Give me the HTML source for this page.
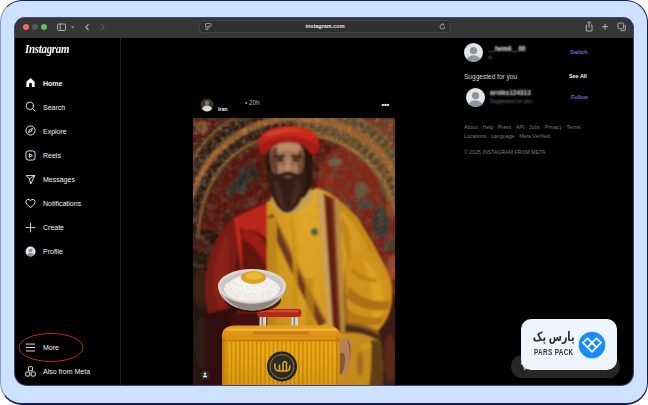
<!DOCTYPE html>
<html lang="en">
<head>
<meta charset="utf-8">
<title>Instagram</title>
<style>
*{box-sizing:border-box;margin:0;padding:0}
html,body{width:648px;height:405px;background:#fff;overflow:hidden}
body{font-family:"Liberation Sans",sans-serif;position:relative;color:#f5f5f5}
.frame{position:absolute;left:0;top:0;width:648px;height:405px;background:#cde2ff;border:1px solid #1b1a5c;border-bottom-width:2px;border-left-color:rgba(27,26,92,0.35);border-radius:22px}
.win{position:absolute;left:15px;top:18px;width:618px;height:367px;background:#000;box-shadow:0 0 0 1px rgba(21,20,70,0.75);border-radius:10px 10px 12px 12px;overflow:hidden}
.in{position:absolute;left:0;top:-1px;width:618px;height:369px}
.bar{position:absolute;left:0;top:0;width:100%;height:21px;background:#363637}
.tl{position:absolute;top:7px;width:6px;height:6px;border-radius:50%}
.url{position:absolute;left:184px;top:3px;width:252px;height:13px;border-radius:4px;background:#2f2f31;border:1px solid #454547;color:#e6e6e6;font-size:5.5px;font-weight:bold;text-align:center;line-height:11px}
.side{position:absolute;left:0;top:21px;width:106px;height:349px;border-right:1px solid #1f1f1f}
.logo{position:absolute;left:10px;top:4px;font-family:"Liberation Serif",serif;font-style:italic;font-weight:bold;font-size:12.500px;color:#fff;letter-spacing:-0.300px;transform:scaleX(0.870);transform-origin:0 0}
.nav{position:absolute;left:28px;margin-top:0.7px;font-size:7px;color:#f2f2f2;white-space:nowrap;line-height:8px}
.nav.b{font-weight:bold}
.ico{position:absolute;left:10px;width:11px;height:11px}
.t{position:absolute;white-space:nowrap}
.main,.rail{position:absolute;left:0;top:0;width:0;height:0}
.blur{filter:url(#tb)}
.foot{font-size:5.150px;color:#7e7e7e;letter-spacing:0.050px}
.post{position:absolute;left:178px;top:101px;width:202px;height:269px;background:#6a2a1a;overflow:hidden}
.pill{position:absolute;left:496px;top:338px;width:109px;height:23px;border-radius:11.500px;background:#262626}
.card{position:absolute;left:506px;top:302px;width:96px;height:51px;border-radius:10px;background:#eef5ff}
.card .fa{position:absolute;right:42.500px;top:8.500px;font-family:"Liberation Sans","DejaVu Sans",sans-serif;font-weight:bold;font-size:9.500px;line-height:18px;transform:scaleY(1.320);color:#2b2b2b;direction:rtl;white-space:nowrap}
.card .en{position:absolute;left:12.500px;top:28px;font-size:8.600px;font-weight:bold;transform:scaleX(0.740);transform-origin:0 0;letter-spacing:0.450px;color:#303030;white-space:nowrap}
</style>
</head>
<body>
<svg width="0" height="0" style="position:absolute"><defs><filter id="tb" x="-10%" y="-30%" width="120%" height="160%"><feGaussianBlur stdDeviation="1" result="b"/><feComposite in="SourceGraphic" in2="b" operator="arithmetic" k1="0" k2="0.2" k3="0.9" k4="0"/></filter></defs></svg>
<div class="frame"></div>
<div class="win"><div class="in">
  <div class="bar">
    <div class="tl" style="left:8px;background:#ed6a5e"></div>
    <div class="tl" style="left:17px;background:#5a5a5c"></div>
    <div class="tl" style="left:26px;background:#61c554"></div>
    <svg style="position:absolute;left:40px;top:5px" width="70" height="11" viewBox="0 0 70 11" fill="none" stroke="#b9b9bb" stroke-width="0.9">
      <rect x="2.5" y="2" width="8" height="6.5" rx="1"/><line x1="5.2" y1="2" x2="5.2" y2="8.5"/>
      <path d="M16.2 4.6 L17.8 6.2 L19.4 4.6" fill="#b9b9bb" stroke="none"/>
      <path d="M33.5 2.3 L30.8 5.2 L33.5 8.1" stroke-width="1.1"/>
      <path d="M46.5 2.3 L49.2 5.2 L46.5 8.1" stroke="#5d5d60" stroke-width="1.1"/>
    </svg>
    <div class="url">instagram.com
      <svg style="position:absolute;left:5px;top:2px" width="7" height="7" viewBox="0 0 7 7" fill="none" stroke="#a9a9ab" stroke-width="0.8"><rect x="0.500" y="0.600" width="5.600" height="2.800" rx="0.300"/><line x1="0.300" y1="5" x2="4.600" y2="5"/><line x1="0.300" y1="6.500" x2="3.200" y2="6.500"/></svg>
      <svg style="position:absolute;right:4px;top:2px" width="7" height="7" viewBox="0 0 7 7" fill="none" stroke="#b9b9bb" stroke-width="0.8"><path d="M5.8 3.6 A2.4 2.4 0 1 1 4.6 1.5"/><path d="M3.6 0.3 L5 1.5 L3.6 2.6" /></svg>
    </div>
    <svg style="position:absolute;left:567px;top:3px" width="50" height="14" viewBox="0 0 50 14" fill="none" stroke="#b9b9bb" stroke-width="0.9">
      <path d="M5.5 5.2 H4.3 V11 H10 V5.2 H8.8"/><path d="M7.15 8 V1.8 M5.5 3.3 L7.15 1.6 L8.8 3.3"/>
      <path d="M20 6.7 H26 M23 3.7 V9.7" stroke-width="1"/>
      <rect x="36" y="3" width="5.6" height="5.8" rx="1.2"/><path d="M43.3 5 V9.5 A1.2 1.2 0 0 1 42.1 10.7 H38.6" />
    </svg>
  </div>
  <div class="side">
    <div class="logo">Instagram</div>
    <!-- nav items: y relative to .side (top=38 global => side top = 16+1+21=38) -->
    <svg class="ico" style="top:39px" viewBox="0 0 24 24"><path d="M3 22 V10.2 L12 2 L21 10.2 V22 H15 V15.5 a3 3 0 0 0 -6 0 V22 Z" fill="#fff"/></svg>
    <div class="nav b" style="top:41px">Home</div>
    <svg class="ico" style="top:63px" viewBox="0 0 24 24" fill="none" stroke="#f5f5f5" stroke-width="2" stroke-linecap="round"><circle cx="10.5" cy="10.5" r="8"/><line x1="16.5" y1="16.5" x2="22" y2="22"/></svg>
    <div class="nav" style="top:65px">Search</div>
    <svg class="ico" style="top:87px" viewBox="0 0 24 24" fill="none" stroke="#f5f5f5" stroke-width="2" stroke-linejoin="round"><circle cx="12" cy="12" r="10"/><path d="M16.5 7.5 L13.8 13.8 L7.5 16.5 L10.2 10.2 Z"/></svg>
    <div class="nav" style="top:89px">Explore</div>
    <svg class="ico" style="top:111.5px" viewBox="0 0 24 24" fill="none" stroke="#f5f5f5" stroke-width="2" stroke-linejoin="round"><rect x="2" y="2" width="20" height="20" rx="5.5"/><path d="M9.5 8 L16 12 L9.5 16 Z"/></svg>
    <div class="nav" style="top:113px">Reels</div>
    <svg class="ico" style="top:135.5px" viewBox="0 0 24 24" fill="none" stroke="#f5f5f5" stroke-width="2" stroke-linejoin="round"><path d="M2.5 3.5 H21.5 L12.5 21.5 L9.5 10.5 Z"/><path d="M9.5 10.5 L21.5 3.5"/></svg>
    <div class="nav" style="top:137px">Messages</div>
    <svg class="ico" style="top:159.5px" viewBox="0 0 24 24" fill="none" stroke="#f5f5f5" stroke-width="2" stroke-linejoin="round"><path d="M12 21 C5 15.5 2 12 2 8.2 A5.2 5.2 0 0 1 12 6.2 A5.2 5.2 0 0 1 22 8.2 C22 12 19 15.5 12 21 Z"/></svg>
    <div class="nav" style="top:161px">Notifications</div>
    <svg class="ico" style="top:183.500px" viewBox="0 0 24 24" fill="none" stroke="#f5f5f5" stroke-width="1.8" stroke-linecap="round"><path d="M12 2.5 V21.5 M2.500 12 H21.500"/></svg>
    <div class="nav" style="top:185px">Create</div>
    <svg class="ico" style="top:208px" viewBox="0 0 24 24"><circle cx="12" cy="12" r="11" fill="#e4e6ea"/><circle cx="12" cy="9.500" r="4.300" fill="#8e949e"/><path d="M4 19.500 A8.500 7 0 0 1 20 19.500 A11 11 0 0 1 4 19.500 Z" fill="#8e949e"/></svg>
    <div class="nav" style="top:209.500px">Profile</div>
    <svg class="ico" style="top:303.500px" viewBox="0 0 24 24" fill="none" stroke="#f5f5f5" stroke-width="2" stroke-linecap="round"><path d="M3 4.500 H21 M3 12 H21 M3 19.500 H21"/></svg>
    <div class="nav" style="top:305px">More</div>
    <svg class="ico" style="top:327.500px" viewBox="0 0 24 24" fill="none" stroke="#f5f5f5" stroke-width="2"><rect x="7.500" y="1.500" width="9" height="9" rx="1.800"/><rect x="1.500" y="13" width="9" height="9" rx="1.800"/><rect x="13.500" y="13" width="9" height="9" rx="1.800"/></svg>
    <div class="nav" style="top:329.500px">Also from Meta</div>
    <svg style="position:absolute;left:2px;top:294px" width="68" height="32" viewBox="0 0 68 32" fill="none" stroke="#d0312d" stroke-width="0.9"><ellipse cx="34" cy="15.500" rx="32" ry="14"/></svg>
  </div>
  <!-- main feed -->
  <div class="main">
    <svg style="position:absolute;left:185px;top:81px" width="14" height="14" viewBox="0 0 14 14"><defs><filter id="ab"><feGaussianBlur stdDeviation="0.6"/></filter><clipPath id="ac"><circle cx="7" cy="7" r="6.5"/></clipPath></defs><g clip-path="url(#ac)"><rect width="14" height="14" fill="#39382f"/><g filter="url(#ab)"><ellipse cx="7" cy="11.500" rx="5" ry="4" fill="#d8d8d2"/><circle cx="7" cy="5" r="2.200" fill="#8a7560"/></g></g></svg>
    <div class="t" style="left:203px;top:88.500px;font-size:5.200px;font-weight:bold;color:#f2f2f2">Iran</div>
    <div class="t" style="left:230px;top:82px;font-size:6.300px;color:#b4b4b4">• 20h</div>
    <div class="t" style="left:366.500px;top:83px;font-size:8px;font-weight:bold;letter-spacing:-0.3px;color:#f2f2f2">•••</div>
    <div class="post">
<svg width="202" height="269" viewBox="0 0 202 269" style="position:absolute;left:0;top:0">
<defs>
  <filter id="b1" x="-10%" y="-10%" width="120%" height="120%"><feGaussianBlur stdDeviation="0.9"/></filter>
  <filter id="b2" x="-10%" y="-10%" width="120%" height="120%"><feGaussianBlur stdDeviation="1.6"/></filter>
  <filter id="b3" x="-20%" y="-20%" width="140%" height="140%"><feGaussianBlur stdDeviation="3.5"/></filter>
  <filter id="b05"><feGaussianBlur stdDeviation="0.45"/></filter>
  <!-- dark motif blotches -->
  <filter id="tex" x="0" y="0" width="100%" height="100%">
    <feTurbulence type="fractalNoise" baseFrequency="0.13" numOctaves="2" seed="11" result="n"/>
    <feColorMatrix in="n" type="matrix" values="0 0 0 0 0.11  0 0 0 0 0.09  0 0 0 0 0.07  2.6 0 0 0 -1.05"/>
  </filter>
  <!-- gold flecks -->
  <filter id="tex2" x="0" y="0" width="100%" height="100%">
    <feTurbulence type="fractalNoise" baseFrequency="0.22" numOctaves="2" seed="5" result="n"/>
    <feColorMatrix in="n" type="matrix" values="0 0 0 0 0.72  0 0 0 0 0.48  0 0 0 0 0.20  0 2.6 0 0 -1.25"/>
  </filter>
  <!-- robe fabric grain -->
  <filter id="tex3" x="0" y="0" width="100%" height="100%">
    <feTurbulence type="fractalNoise" baseFrequency="0.35" numOctaves="2" seed="2" result="n"/>
    <feColorMatrix in="n" type="matrix" values="0 0 0 0 0.45  0 0 0 0 0.27  0 0 0 0 0.04  0 0 1.8 0 -0.75"/>
  </filter>
  <filter id="rice" x="0" y="0" width="100%" height="100%">
    <feTurbulence type="fractalNoise" baseFrequency="0.45" numOctaves="2" seed="9" result="n"/>
    <feColorMatrix in="n" type="matrix" values="0 0 0 0 0.62  0 0 0 0 0.62  0 0 0 0 0.68  0 0 2.4 0 -1.05" result="c"/>
    <feComposite in="c" in2="SourceGraphic" operator="in"/>
  </filter>
  <linearGradient id="gShade" x1="0" y1="0" x2="0" y2="1"><stop offset="0" stop-color="#b06a10" stop-opacity="0"/><stop offset="0.45" stop-color="#b06a10" stop-opacity="0.120"/><stop offset="1" stop-color="#a86210" stop-opacity="0.420"/></linearGradient>
  <linearGradient id="gHat" x1="0" y1="0" x2="0" y2="1"><stop offset="0" stop-color="#cf2f1f"/><stop offset="0.5" stop-color="#bf2519"/><stop offset="1" stop-color="#8a1610"/></linearGradient>
  <linearGradient id="gCase" x1="0" y1="0" x2="0" y2="1"><stop offset="0" stop-color="#e6a020"/><stop offset="0.18" stop-color="#de9016"/><stop offset="0.32" stop-color="#e9a80f"/><stop offset="1" stop-color="#d6940c"/></linearGradient>
  <linearGradient id="gRobe" x1="0" y1="0" x2="1" y2="0"><stop offset="0" stop-color="#cf941c"/><stop offset="0.3" stop-color="#e6aa27"/><stop offset="0.7" stop-color="#dc9e22"/><stop offset="1" stop-color="#c88c1c"/></linearGradient>
  <pattern id="ribs" width="4.2" height="10" patternUnits="userSpaceOnUse"><rect x="0" width="1.400" height="10" fill="#b06f08" opacity="0.55"/><rect x="2.200" width="0.900" height="10" fill="#f6c23a" opacity="0.35"/></pattern>
  <clipPath id="ricec"><ellipse cx="59" cy="170" rx="29" ry="13"/></clipPath>
  <clipPath id="bandc"><path d="M-10 -10 L212 -10 L212 110 L204 100 C192 46 152 15 101 17 C46 17 8 55 5 120 L-10 130 Z"/></clipPath>
  <clipPath id="fieldc"><path d="M5 120 C8 55 46 17 101 17 C152 15 192 46 204 100 L204 150 L5 150 Z"/></clipPath>
  <clipPath id="pc"><rect width="202" height="269"/></clipPath>
  <clipPath id="robeclip"><path d="M74 84 C84 78 108 78 124 70 C134 73 142 78 147 83 L164 99 L178.500 123 L191 146 C195 153 198 160 199 168 C200 180 198 192 194 200 C191 206 188 210 185 213 L186 218 C189 230 190 250 190 269 L74 269 Z"/></clipPath>
</defs>
<g clip-path="url(#pc)">
  <!-- carpet background -->
  <rect width="202" height="269" fill="#4a1610"/>
  <g filter="url(#b2)">
    <!-- inner arch field -->
    <path d="M5 120 C8 55 46 17 101 17 C152 15 192 46 204 100 L204 150 L5 150 Z" fill="#571710"/>
    <ellipse cx="158" cy="66" rx="34" ry="40" fill="#812519"/>
    <ellipse cx="140" cy="100" rx="20" ry="20" fill="#6e1f15"/>
    <!-- arch band (wide, mixed) -->
    <path d="M-6 100 C-2 50 40 2 101 0" fill="none" stroke="#41291a" stroke-width="34"/>
    <path d="M101 0 C166 0 208 44 213 94" fill="none" stroke="#7c5a2e" stroke-width="34"/>
    <!-- central stripe -->
    <path d="M-6 100 C-2 50 40 2 101 0 C166 0 208 44 213 94" fill="none" stroke="#a0642f" stroke-width="6.500"/>
    <!-- top corners -->
    <path d="M0 0 L34 0 C18 10 6 24 0 38 Z" fill="#561d12"/>
    <circle cx="9" cy="9" r="5.500" fill="#8c602a"/>
    <circle cx="9" cy="9" r="2.500" fill="#5a2214"/>
    <path d="M202 0 L170 0 C186 8 196 20 202 34 Z" fill="#7a3a20"/>
    <!-- motifs in field -->
    <ellipse cx="50" cy="62" rx="7" ry="14" fill="#2c2b28" transform="rotate(15 50 62)"/>
    <ellipse cx="62" cy="56" rx="4" ry="10" fill="#2f2622" transform="rotate(-20 62 56)"/>
    <ellipse cx="40" cy="70" rx="4" ry="9" fill="#33302b" transform="rotate(40 40 70)"/>
    <ellipse cx="36" cy="98" rx="10" ry="8" fill="#46160f"/>
    <ellipse cx="60" cy="84" rx="6" ry="5" fill="#6c2216"/>
    <ellipse cx="142" cy="44" rx="7" ry="4" fill="#6a6248"/>
    <ellipse cx="168" cy="72" rx="6" ry="8" fill="#665a40"/>
    <ellipse cx="150" cy="90" rx="8" ry="5" fill="#585844"/>
    <ellipse cx="136" cy="64" rx="5" ry="8" fill="#8e2e1c"/>
    <!-- lower left dark -->
    <path d="M-5 112 L20 112 L44 120 L44 275 L-5 275 Z" fill="#27140f"/>
    <ellipse cx="8" cy="126" rx="10" ry="8" fill="#4a1c14"/>
    <ellipse cx="8" cy="170" rx="8" ry="20" fill="#382418"/>
    <ellipse cx="10" cy="225" rx="9" ry="26" fill="#2f1d17"/>
    <!-- lower right -->
    <rect x="160" y="84" width="50" height="92" fill="#782318"/>
    <ellipse cx="188" cy="104" rx="9" ry="16" fill="#38362f"/>
    <ellipse cx="172" cy="86" rx="8" ry="5" fill="#4a4438"/>
    <ellipse cx="198" cy="92" rx="5" ry="8" fill="#8a4a24"/>
    <ellipse cx="199" cy="150" rx="5" ry="12" fill="#a04a22"/>
    <ellipse cx="196" cy="128" rx="6" ry="6" fill="#4a3a2c"/>
    <rect x="176" y="176" width="34" height="100" fill="#3c1c13"/>
    <ellipse cx="197" cy="240" rx="6" ry="24" fill="#5a2a18"/>
  </g>
  <g filter="url(#b1)" fill="none">
    <path d="M-8 70 C-6 30 36 -14 101 -17" stroke="#a07232" stroke-width="1.400"/>
    <path d="M5 120 C8 55 46 17 101 17 C152 15 192 46 204 100" stroke="#a87434" stroke-width="1.700"/>
    <path d="M-7 84 C-4 40 38 -6 101 -8.500" stroke="#21140e" stroke-width="8" stroke-dasharray="4.500 2.500" opacity="0.780"/>
    <path d="M-1 112 C3 56 43 10 101 8.500" stroke="#21140e" stroke-width="8" stroke-dasharray="4.500 2.500" opacity="0.780"/>
    <path d="M101 8.500 C159 8 200 48 209 98" stroke="#33291f" stroke-width="7" stroke-dasharray="4 3.500" opacity="0.550"/>
    <path d="M101 -8.500 C170 -8 214 34 218 80" stroke="#33291f" stroke-width="7" stroke-dasharray="4 3.500" opacity="0.550"/>
  </g>
  <rect width="202" height="150" filter="url(#tex)" opacity="0.500"/>
  <g clip-path="url(#bandc)"><rect width="202" height="130" filter="url(#tex2)" opacity="0.300"/></g>
  <g clip-path="url(#fieldc)"><rect width="202" height="150" filter="url(#tex2)" opacity="0.100"/></g>

  <g filter="url(#b1)">
    <!-- red cloak left -->
    <path d="M44 97 L76 83 L78 215 L24 215 C12 200 10 172 14 150 C18 126 30 105 44 97 Z" fill="#61150f"/>
    <path d="M41 100 L76 84 L75 122 C70 116 60 110 50 112 Z" fill="#bb251a"/>
    <path d="M50 112 C58 110 70 118 74 130 L74 150 C68 136 58 124 48 120 Z" fill="#9c1e15"/>
    <path d="M14 150 C18 128 30 107 41 100 L48 120 C42 140 38 170 36 215 L24 215 C12 198 10 172 14 150 Z" fill="#7a1c15"/>
    <path d="M21 150 C23 140 28 126 35 116 L36 150 C34 165 32 180 30 195 C22 185 19 168 21 150 Z" fill="#8a2018"/>
    <path d="M41 100 L46 98 C48 118 50 140 49 160 C47 140 44 120 41 100 Z" fill="#c02a1e"/>
    <path d="M12 196 L44 188 L40 269 L12 269 Z" fill="#32100d"/>
    <path d="M36 196 L78 196 L78 269 L36 269 Z" fill="#43110d"/>
    <!-- yellow robe body -->
    <path d="M74 84 C84 78 108 78 124 70 C134 73 142 78 147 83 L164 99 L178.500 123 L191 146 C195 153 198 160 199 168 C200 180 198 192 194 200 C191 206 188 210 185 213 L186 218 C189 230 190 250 190 269 L74 269 Z" fill="url(#gRobe)"/>
    <g clip-path="url(#robeclip)">
      <rect x="70" y="80" width="135" height="190" fill="url(#gShade)"/>
      <rect x="70" y="80" width="130" height="190" filter="url(#tex3)" opacity="0.380"/>
      <!-- shoulder shading -->
      <path d="M146 80 C162 92 178 108 190 136 L176 134 C168 114 158 100 146 92 Z" fill="#c58a18"/>
      <!-- right sleeve -->
      <path d="M152 140 C166 128 196 140 199 180 C200 204 184 216 162 222 C152 216 148 176 152 140 Z" fill="#d0921b"/>
      <path d="M168 140 C180 146 190 162 191 182 C191 194 186 204 178 208 C182 194 180 162 168 140 Z" fill="#dca222"/>
      <path d="M156 168 C166 180 182 186 197 182 L196 191 C180 195 164 190 154 180 Z" fill="#ae7014"/>
      <path d="M153 190 C164 199 178 202 192 198 L188 206 C176 209 162 206 152 199 Z" fill="#b47616"/>
      <path d="M160 150 C166 156 174 160 184 160 L184 164 C174 165 164 160 158 154 Z" fill="#b87c18" opacity="0.800"/>
      <path d="M152 150 C154 180 154 200 158 214 L153 214 C150 196 150 170 152 150 Z" fill="#a0681a"/>
      <!-- lower robe right -->
      <path d="M152 216 C162 208 180 208 189 218 L191 269 L158 269 C160 250 158 232 152 216 Z" fill="#c48c1c"/>
      <path d="M178 222 C184 222 188 224 190 228 L192 269 L176 269 C178 254 179 238 178 222 Z" fill="#5e3c18"/>
      <ellipse cx="167" cy="246" rx="3.500" ry="12" fill="#a06c1a"/>
      <ellipse cx="173" cy="228" rx="6" ry="3" fill="#d09a22"/>
      <!-- cuff fur -->
      <path d="M146 207 C158 205 178 210 190 219 L187 224 C176 216 160 213 148 215 Z" fill="#4a2a17"/>
      <path d="M147 204.500 C160 202 180 208 191 217 L190 219.500 C178 211 160 206 147 207.500 Z" fill="#8a5a22"/>
      <!-- diagonal sash -->
      <path d="M73 100 L80.500 95 C97 130 115 170 134 204 L126 209 C107 174 89 134 73 100 Z" fill="#70391a"/>
      <path d="M79 96 L80.500 95 C97 130 115 170 134 204 L132.500 205 C113 171 95 131 79 96 Z" fill="#a86c2a"/>
      <!-- robe center fold shading -->
      <path d="M74 100 L84 99 L83 269 L74 269 Z" fill="#c0861c"/>
      <path d="M96 100 C100 120 100 150 98 200 L104 200 C106 150 104 120 100 100 Z" fill="#c89218" opacity="0.800"/>
      <path d="M112 160 L120 160 L124 269 L114 269 Z" fill="#bf8718" opacity="0.700"/>
      <path d="M150 100 C158 112 160 130 156 148 C152 132 150 116 146 104 Z" fill="#b98218" opacity="0.800"/>
    </g>
    <!-- vertical strap -->
    <path d="M124 72 L146 82 L152 214 L137 214 Z" fill="#86481f"/>
    <path d="M132 78 L139 81.500 L146 214 L141 214 Z" fill="#641a13"/>
    <path d="M124 72 L130.500 75 L140 214 L136 214 Z" fill="#c8a25a"/>
    <path d="M141.500 80 L146 82 L152 214 L148 214 Z" fill="#b78a40"/>
    <!-- collar -->
    <path d="M77 80 C82 102 112 102 122 75 L116 71 C108 90 88 92 82 78 Z" fill="#c6a058"/>
    <!-- hair -->
    <path d="M73 42 C71 28 84 21 96 21 C113 21 121 30 119 47 C120 62 119 72 111 80 L80 80 C76 68 74 54 73 42 Z" fill="#20120c"/>
    <!-- face -->
    <path d="M77 38 C77 27 86 23 95 23 C104 23 112 27 111 42 C111 54 106 66 95 68 C84 66 77 52 77 38 Z" fill="#a47556"/>
    <path d="M77.500 40 C77.500 34 80 30 84 29 L85 60 C80 54 77.500 46 77.500 40 Z" fill="#64402c"/>
    <path d="M105 30 C110 32 111.500 38 111 44 C110.500 52 108 58 105 62 Z" fill="#734a32"/>
    <path d="M81.500 37.500 L92 36.600 L92 39.200 L81.500 40 Z M98 36.600 L108.500 37.500 L108.500 40 L98 39.200 Z" fill="#24150f"/>
    <ellipse cx="87.500" cy="42" rx="3.600" ry="1.700" fill="#2e1b13"/>
    <ellipse cx="102.500" cy="42" rx="3.600" ry="1.700" fill="#2e1b13"/>
    <path d="M82 44 C85 46 90 46 92 44 L92 46 C89 47.500 85 47.500 82 46 Z M98 44 C100 46 105 46 108 44 L108 46 C105 47.500 101 47.500 98 46 Z" fill="#80553c"/>
    <path d="M93.500 41 L96.500 41 L98 53 L92 53 Z" fill="#b88a66"/>
    <path d="M84 27 C90 25 100 25 107 27.500 L106 34 C98 32 92 32 85 34 Z" fill="#b98c68"/>
    <ellipse cx="88" cy="50" rx="3" ry="3.200" fill="#ac7c5c"/>
    <ellipse cx="102.500" cy="50" rx="3" ry="3.200" fill="#a87858"/>
    <!-- beard -->
    <path d="M76.500 48 C79 56 84 57.500 88 55 C92 53 98 53 102 55 C106 57.500 110 56 112.500 48 C115 66 111 84 100 92.500 C96 95.500 92 95.500 88 92.500 C78 84 74.500 66 76.500 48 Z" fill="#351f18"/>
    <path d="M84 62 C88 70 90 80 92 92 C86 88 82 76 81 64 Z" fill="#4a2c20"/>
    <path d="M103 62 C100 72 98 82 97 92 C104 86 108 74 108 64 Z" fill="#452a1e"/>
    <ellipse cx="95" cy="58.700" rx="3.800" ry="1.200" fill="#7c4c3a"/>
    <!-- hat -->
    <path d="M65.500 29 C63 14 80 8 97 8 C114 8 128.500 15 126 30 C126 36 122 38.500 118.500 36 C113 28 105 24 96 24 C86 24 78 28 72.500 36.500 C68 37 66 33.500 65.500 29 Z" fill="url(#gHat)"/>
    <path d="M66.500 30 C75 21.500 86 18.500 96 18.500 C106 18.500 117 21.500 125 30 C125 36 121 38 118.500 36 C113 28 105 24 96 24 C86 24 78 28 72.500 36.500 C69 36.500 67 34 66.500 30 Z" fill="#a31c13"/>
    <path d="M74 16 C82 11 100 10 112 13 C104 12.500 86 13.500 76 19 Z" fill="#df4630" opacity="0.800"/>
    <!-- green gem -->
    <circle cx="121.500" cy="114" r="3.400" fill="#1d4f38"/>
    <circle cx="121.500" cy="114" r="1.700" fill="#2f8a5a"/>
  </g>

  <!-- suitcase -->
  <g filter="url(#b05)">
    <!-- handle -->
    <rect x="66.500" y="197" width="6.500" height="13" fill="#d6d2ca"/>
    <rect x="98.500" y="197" width="6.500" height="13" fill="#d6d2ca"/>
    <rect x="68.500" y="197" width="1.600" height="13" fill="#8a8680"/>
    <rect x="100.500" y="197" width="1.600" height="13" fill="#8a8680"/>
    <rect x="64" y="191" width="44.500" height="8" rx="3.500" fill="#b5271c"/>
    <rect x="66.500" y="192" width="39" height="2.200" rx="1" fill="#dc4c3c" opacity="0.800"/>
    <path d="M29 269 L29 218 C29 211 34 207.500 42 207.500 L134 207.500 C142 207.500 147 211 147 218 L147 269 Z" fill="url(#gCase)"/>
    <path d="M29 269 L29 224 L147 224 L147 269 Z" fill="url(#ribs)"/>
    <rect x="33" y="210.500" width="110" height="2.200" rx="1" fill="#f2ba40" opacity="0.800"/>
    <rect x="29" y="221.500" width="118" height="1.800" fill="#b27008" opacity="0.700"/>
    <rect x="29" y="219" width="4" height="50" fill="#b87809" opacity="0.600"/>
    <rect x="143" y="219" width="4" height="50" fill="#b87809" opacity="0.500"/>
    <rect x="60" y="213.500" width="56" height="3" rx="1.500" fill="#b06a10" opacity="0.600"/>
    <!-- emblem -->
    <circle cx="89" cy="248.500" r="15" fill="#2a2925"/>
    <circle cx="89" cy="248.500" r="12" fill="none" stroke="#9a7a2a" stroke-width="1"/>
    <circle cx="89" cy="248.500" r="14.200" fill="none" stroke="#151513" stroke-width="1.300" stroke-dasharray="1.500 1.500"/>
    <path d="M82 246 C81 252 84 253 86.500 253 L93 253 C96 253 97 251 97 248 M86.500 253 L86.500 247 M90 253 L90 245 C91 243 93 243 93.500 245 L93.500 253" fill="none" stroke="#d6a61e" stroke-width="1.600" stroke-linecap="round"/>
    <!-- hand -->
    <path d="M146.500 226 C149 219 156 218 158 224 C160 234 158 246 152 257 C148.500 260 146.500 256 147 248 Z" fill="#b58052"/>
    <path d="M147 236 C150 232 153 236 152 244 C151 252 149 258 147 256 Z" fill="#8a5834"/>
    <path d="M154 222 C157.500 224 158.500 234 156 246 C157.500 237 157 228 154 222 Z" fill="#7c4c2c"/>
  </g>
  <!-- plate -->
  <g filter="url(#b05)">
    <ellipse cx="60" cy="182" rx="28" ry="12" fill="#260908" opacity="0.800"/>
    <path d="M25 168 C25 180 40 192.500 59 192.500 C78 192.500 93 180 93 168 Z" fill="#bcb6ae"/>
    <path d="M32 178 C38 188 50 192.500 59 192.500 C68 192.500 80 188 86 178 C78 184 68 186 59 186 C50 186 40 184 32 178 Z" fill="#8f8881"/>
    <ellipse cx="59" cy="168" rx="34" ry="17" fill="#dedad3"/>
    <ellipse cx="59" cy="168.500" rx="31.500" ry="14.800" fill="#c9c7c9"/>
    <ellipse cx="59" cy="171" rx="28" ry="12.500" fill="#f3f1ec"/>
    <ellipse cx="59" cy="166" rx="22" ry="9" fill="#f7f5f0"/>
    <g clip-path="url(#ricec)"><rect x="28" y="154" width="62" height="32" filter="url(#rice)" opacity="0.550"/></g>
    <ellipse cx="60.500" cy="159.500" rx="12.500" ry="6.500" fill="#dca024"/>
    <ellipse cx="61" cy="158" rx="8.500" ry="3.800" fill="#ebba34"/>
  </g>
  <!-- small tag icon -->
  <circle cx="12" cy="257" r="4.600" fill="#2b2b2b"/>
  <circle cx="12" cy="255.600" r="1.200" fill="#f2f2f2"/>
  <path d="M9.800 259.300 A2.200 2 0 0 1 14.200 259.300 Z" fill="#f2f2f2"/>
</g>
</svg>
</div>
  </div>
  <!-- right rail -->
  <div class="rail">
    <svg style="position:absolute;left:449px;top:25.600px" width="19" height="19" viewBox="0 0 24 24"><defs><clipPath id="c1"><circle cx="12" cy="12" r="12"/></clipPath></defs><circle cx="12" cy="12" r="12" fill="#e3e5e9"/><g clip-path="url(#c1)" fill="#8f959f"><circle cx="12" cy="9.500" r="4.600"/><ellipse cx="12" cy="22.500" rx="9" ry="7"/></g></svg>
    <div class="t blur" style="left:473px;top:27.500px;font-size:6.300px;font-weight:bold;color:#f0f0f0">__hemil__00</div>
    <div class="t blur" style="left:473px;top:37px;font-size:5px;color:#7a7a7a">m</div>
    <div class="t" style="left:555px;top:32.300px;font-size:6px;color:#8299ff">Switch</div>
    <div class="t" style="left:449px;top:55.600px;font-size:6.550px;color:#d4d4d4">Suggested for you</div>
    <div class="t" style="left:554px;top:56.300px;font-size:5.400px;font-weight:bold;color:#f5f5f5">See All</div>
    <svg style="position:absolute;left:450.500px;top:70.500px" width="19" height="19" viewBox="0 0 24 24"><defs><clipPath id="c2"><circle cx="12" cy="12" r="12"/></clipPath></defs><circle cx="12" cy="12" r="12" fill="#e3e5e9"/><g clip-path="url(#c2)" fill="#8f959f"><circle cx="12" cy="9.500" r="4.600"/><ellipse cx="12" cy="22.500" rx="9" ry="7"/></g></svg>
    <div class="t blur" style="left:475px;top:72px;font-size:6.500px;font-weight:bold;color:#dcdcdc">arniks124313</div>
    <div class="t blur" style="left:475px;top:81px;font-size:5.200px;color:#6d6d6d">Suggested for you</div>
    <div class="t" style="left:556px;top:76.800px;font-size:5.900px;color:#8299ff">Follow</div>
    <div class="t foot" style="left:449px;top:107px">About · Help · Press · API · Jobs · Privacy · Terms ·</div>
    <div class="t foot" style="left:449px;top:116px">Locations · Language · Meta Verified</div>
    <div class="t foot" style="left:449px;top:132px">© 2025 INSTAGRAM FROM META</div>
  </div>
  <!-- floating messages pill + brand card -->
  <div class="pill"><svg style="position:absolute;left:9px;top:7px" width="9" height="9" viewBox="0 0 24 24" fill="none" stroke="#d8d8d8" stroke-width="2.200" stroke-linejoin="round"><path d="M2.500 3.500 H21.500 L12.500 21.500 L9.500 10.500 Z"/></svg></div>
  <div class="card">
    <div class="fa">پارس پک</div>
    <div class="en">PARS PACK</div>
    <svg style="position:absolute;left:57px;top:12px" width="28" height="28" viewBox="0 0 28 28"><circle cx="14" cy="14" r="13.300" fill="#1a8cff"/><g fill="none" stroke="#fff" stroke-width="1.600" stroke-linejoin="miter"><path d="M9.500 7.300 L14 11.800 L9.500 16.300 L5 11.800 Z"/><path d="M18.500 7.300 L23 11.800 L18.500 16.300 L14 11.800 Z"/><path d="M14 11.800 L18.500 16.300 L14 20.800 L9.500 16.300 Z"/></g></svg>
  </div>
</div></div>
</body>
</html>
